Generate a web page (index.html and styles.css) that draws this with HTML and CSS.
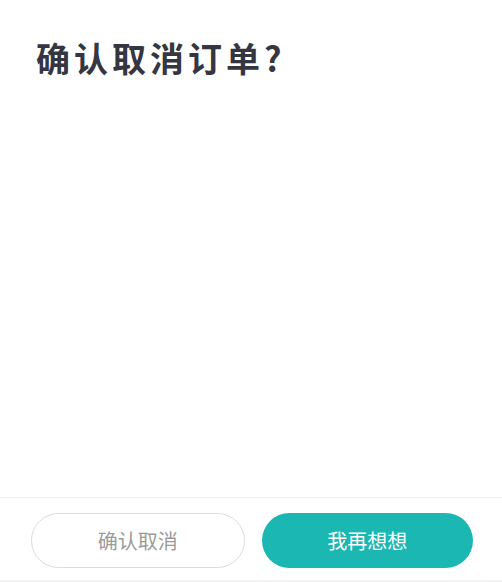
FILE: index.html
```html
<!DOCTYPE html>
<html lang="zh-CN">

<head>
    <meta charset="UTF-8">
    <meta name="viewport" content="width=device-width, initial-scale=1.0">
    <title>确认取消订单</title>
    <link rel="stylesheet" href="styles.css">
</head>

<body>
    <div class="sheet">
        <!-- Title -->
        <div class="sheet-body">
            <h1 class="title">确认取消订单?</h1>
        </div>

        <!-- Bottom actions -->
        <div class="actions">
            <button class="btn btn-ghost">确认取消</button>
            <button class="btn btn-primary">我再想想</button>
        </div>
    </div>
</body>

</html>
```

FILE: styles.css
```css
html, body {
    height: 100%;
}

body {
    margin: 0;
    padding: 0;
    background: #ffffff;
    font-family: 'Noto Sans CJK SC', 'Noto Sans', sans-serif;
}

.sheet {
    display: flex;
    flex-direction: column;
    height: 100%;
    box-sizing: border-box;
    border-bottom: 2px solid #f3f3f3;
}

.sheet-body {
    flex: 1;
    padding: 33px 36px 0;
}

.title {
    margin: 0;
    font-size: 34px;
    font-weight: 700;
    letter-spacing: 4px;
    line-height: 50px;
    color: #343642;
}

.actions {
    display: flex;
    gap: 17px;
    padding: 15px 29px 12px 31px;
    border-top: 1px solid #f2f2f2;
}

.btn {
    flex: 1;
    height: 55px;
    border-radius: 28px;
    font-family: inherit;
    font-size: 20px;
    cursor: pointer;
}

.btn-ghost {
    background: #ffffff;
    border: 1px solid #dcdcdc;
    color: #9a9a9a;
}

.btn-primary {
    background: #1bb8b3;
    border: none;
    color: #ffffff;
}
```
